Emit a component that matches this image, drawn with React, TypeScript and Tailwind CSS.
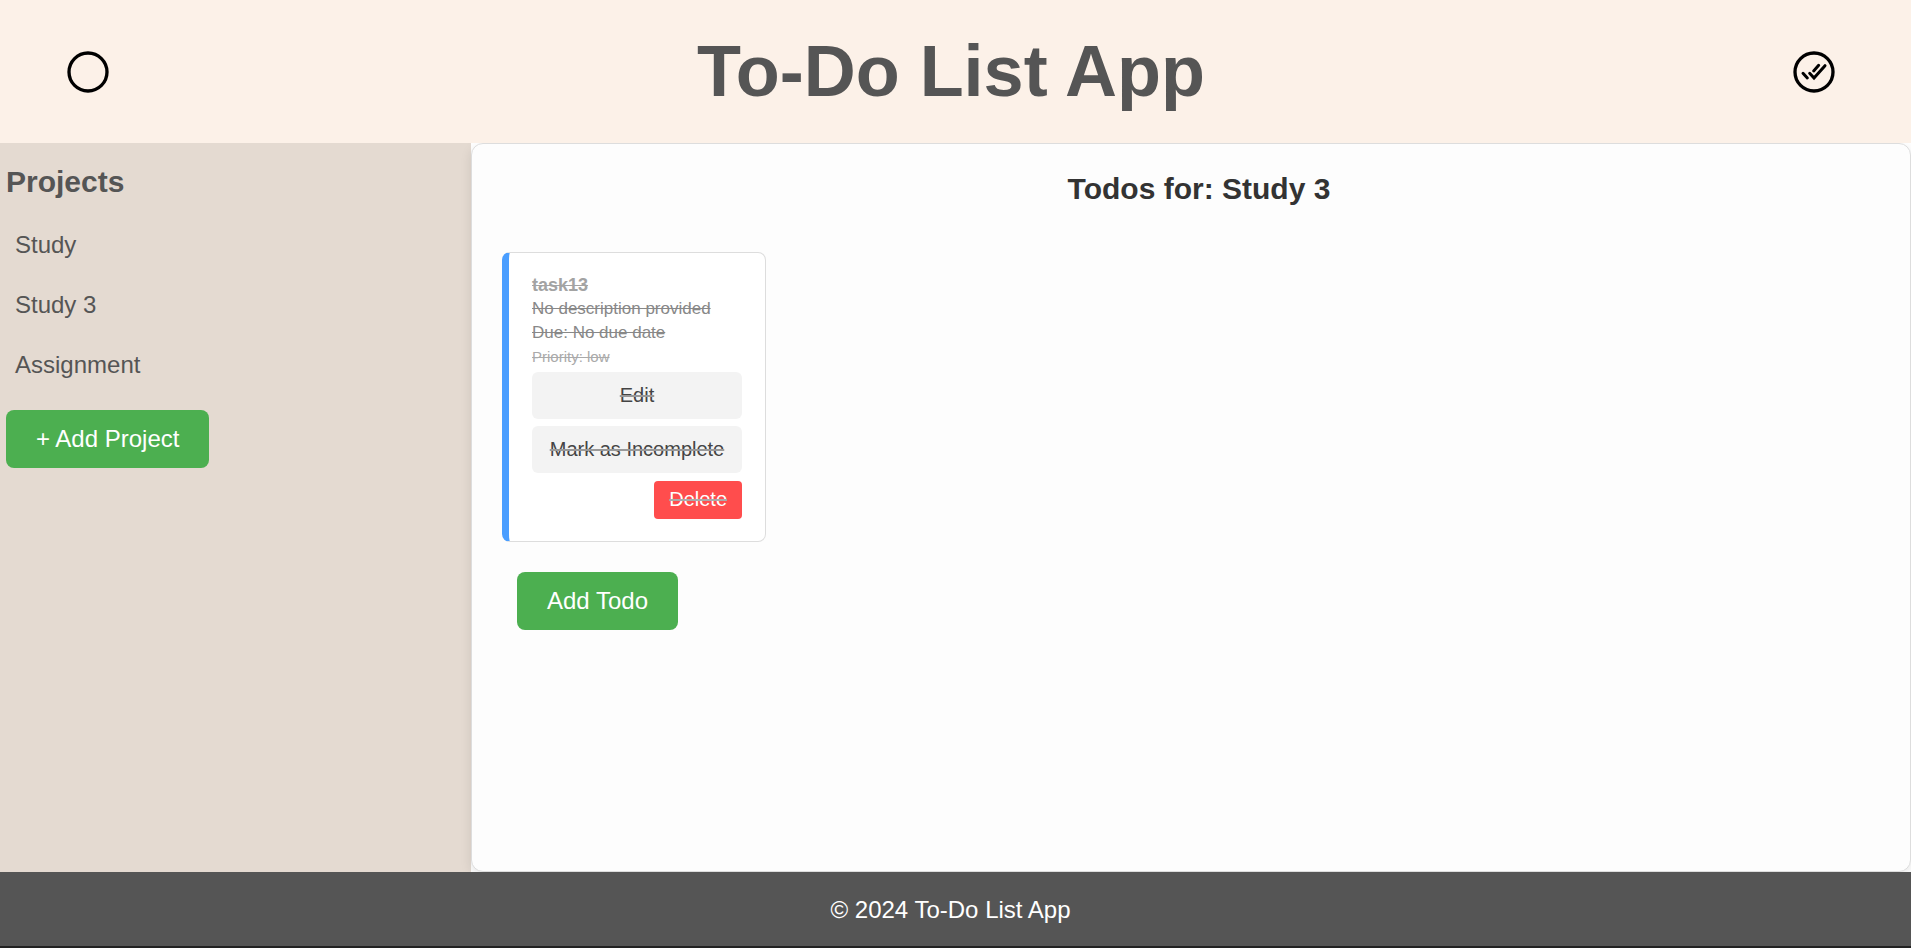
import React from "react";

const projects = ["Study", "Study 3", "Assignment"];

const greenButton =
  "rounded-lg bg-[#4caf50] px-[30px] py-[15px] text-2xl leading-7 text-white hover:bg-[#449d48]";

function CircleIcon() {
  return (
    <svg viewBox="0 0 150 150" className="size-[50px]" fill="none" stroke="#000" strokeWidth="10" aria-hidden="true">
      <circle cx="75" cy="75" r="57" />
    </svg>
  );
}

function DoubleCheckIcon() {
  return (
    <svg
      viewBox="0 0 150 150"
      className="size-[50px]"
      fill="none"
      stroke="#000"
      strokeWidth="10"
      strokeLinecap="round"
      aria-hidden="true"
    >
      <circle cx="75" cy="75" r="57" />
      <path strokeWidth="9" d="M42 79L55 93M62 79L75 93L108 56M74 72L89 55" />
    </svg>
  );
}

function TodoCard() {
  return (
    <article className="flex w-[264px] flex-col rounded-lg border border-l-[7px] border-[#ddd] border-l-[#4a9eff] bg-white px-[23px] pt-5 pb-[22px] leading-6 text-[#a3a3a3]">
      <h3 className="text-lg leading-6 font-bold line-through">task13</h3>
      <p className="text-[17px] text-[#888] line-through">No description provided</p>
      <p className="text-[17px] text-[#888] line-through">Due: No due date</p>
      <p className="text-[15px] leading-6 text-[#aaa] line-through">Priority: low</p>
      <div className="mt-[3px] flex flex-col gap-[7px]">
        <button type="button" className="h-[47px] rounded-md bg-[#f3f3f3] pb-0.5 text-xl text-[#444] line-through decoration-[#999]">
          Edit
        </button>
        <button type="button" className="h-[47px] rounded-md bg-[#f3f3f3] pb-0.5 text-xl text-[#444] line-through decoration-[#999]">
          Mark as Incomplete
        </button>
        <button type="button" className="mt-px h-[38px] self-end rounded bg-[#ff4d4d] px-[15px] pb-0.5 text-xl text-white line-through decoration-[#aaa]">
          Delete
        </button>
      </div>
    </article>
  );
}

export default function App() {
  return (
    <div className="flex min-h-screen flex-col bg-white font-['Liberation_Sans',Arial,sans-serif]">
      <header className="z-10 flex h-[143px] items-center justify-between bg-[#fcf1e8] pr-[72px] pl-[63px]">
        <button type="button" aria-label="Open todos">
          <CircleIcon />
        </button>
        <h1 className="pb-0.5 text-7xl font-bold text-[#555]">To-Do List App</h1>
        <button type="button" aria-label="Completed todos">
          <DoubleCheckIcon />
        </button>
      </header>

      <div className="flex grow">
        <aside className="w-[471px] shrink-0 bg-[#e4dad1] px-1.5 text-[#555]">
          <h2 className="pt-[21px] pb-[15px] text-[30px] leading-9 font-bold">Projects</h2>
          <ul>
            {projects.map((name) => (
              <li key={name}>
                <a href="#" className="block px-[9px] py-4 text-2xl leading-7">
                  {name}
                </a>
              </li>
            ))}
          </ul>
          <button type="button" className={`mt-[15px] ${greenButton}`}>
            + Add Project
          </button>
        </aside>

        <main className="grow rounded-xl border border-[#ddd] bg-[#fdfdfd] px-[30px] pt-[27px] shadow-[0_4px_12px_rgba(0,0,0,0.1)]">
          <h2 className="pl-4 text-center text-[30px] leading-9 font-bold text-[#333]">Todos for: Study 3</h2>
          <div className="mt-[45px]">
            <TodoCard />
          </div>
          <button type="button" className={`mt-[30px] ml-[15px] ${greenButton}`}>
            Add Todo
          </button>
        </main>
      </div>

      <footer className="z-10 flex h-[76px] items-center justify-center border-b-2 border-[#222] bg-[#555] pt-0.5 pr-2.5 text-2xl text-white">
        <p>© 2024 To-Do List App</p>
      </footer>
    </div>
  );
}
